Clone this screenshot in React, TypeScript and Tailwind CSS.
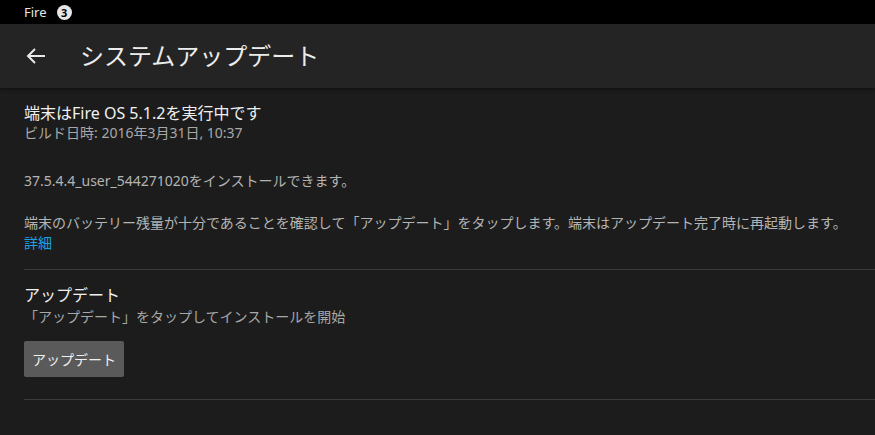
import React from "react";

export default function App() {
  return (
    <div className="w-[875px] h-[435px] bg-[#1c1c1c] overflow-hidden flex flex-col" style={{ fontFamily: '"Noto Sans", "Noto Sans CJK JP", sans-serif' }}>
      <div className="h-[24px] bg-black flex items-center px-[24px] gap-[10px] shrink-0">
        <span className="text-[13px] text-[#e6e6e6] leading-none">Fire</span>
        <span className="w-[15px] h-[15px] rounded-full bg-[#e6e6e6] text-black text-[11px] font-bold flex items-center justify-center leading-none">3</span>
      </div>
      <div className="h-[64px] bg-[#242424] flex items-center shrink-0 shadow-[0_2px_3px_rgba(0,0,0,0.35)]">
        <div className="w-[80px] flex items-center pl-[24px]">
          <svg width="24" height="24" viewBox="0 0 24 24" fill="none" stroke="#e8e8e8" strokeWidth="2">
            <path d="M21 12H4M11 5l-7 7 7 7" />
          </svg>
        </div>
        <span className="text-[24px] text-[#ececec] leading-none">システムアップデート</span>
      </div>
      <div className="px-[24px] pt-[15px] flex flex-col">
        <div className="text-[16px] text-[#f0f0f0] leading-[20px]">端末はFire OS 5.1.2を実行中です</div>
        <div className="text-[14px] text-[#a8a8a8] leading-[20px]">ビルド日時: 2016年3月31日, 10:37</div>
        <div className="text-[14px] text-[#b4b4b4] leading-[20px] mt-[28px]">37.5.4.4_user_544271020をインストールできます。</div>
        <div className="text-[14px] text-[#b4b4b4] leading-[20px] mt-[22px]">端末のバッテリー残量が十分であることを確認して「アップデート」をタップします。端末はアップデート完了時に再起動します。</div>
        <div className="text-[14px] text-[#1ba1e2] leading-[20px]">詳細</div>
      </div>
      <div className="ml-[24px] h-px bg-[#3a3a3a] mt-[16px]" />
      <div className="px-[24px] pt-[15px] flex flex-col">
        <div className="text-[16px] text-[#f0f0f0] leading-[20px]">アップデート</div>
        <div className="text-[14px] text-[#a8a8a8] leading-[20px] mt-[2px]">「アップデート」をタップしてインストールを開始</div>
        <div className="mt-[14px]">
          <button className="w-[100px] h-[36px] bg-[#5a5a5a] rounded-[2px] text-[14px] text-[#f0f0f0]">アップデート</button>
        </div>
      </div>
      <div className="ml-[24px] h-px bg-[#3a3a3a] mt-[22px]" />
    </div>
  );
}
